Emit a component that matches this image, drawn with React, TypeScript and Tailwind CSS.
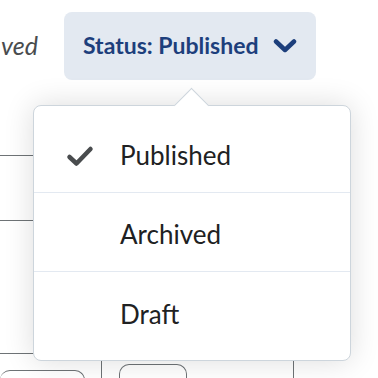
import React from 'react'

const items = ['Published', 'Archived', 'Draft']

const App = () => {
    return (
        <div className="relative w-[378px] h-[378px] overflow-hidden bg-white font-['Lato','Noto_Sans',sans-serif]">

            {/* Header — filter label + status button */}
            <div className="flex items-center h-[92px] pb-[1px]">
                <span className="w-[64px] shrink-0 pr-[26px] text-right whitespace-nowrap text-[25px] italic text-[#494c4e]">ved</span>
                <button className="flex items-center gap-[14px] h-[68px] w-[252px] pl-[19px] rounded-[8px] bg-[#e3e9f1] text-[23px] font-bold text-[#1d3f7c]">
                    Status: Published
                    <svg width="24" height="16" viewBox="0 0 24 16">
                        <path d="M3 3.5 L12 12 L21 3.5" fill="none" stroke="#1d3f7c" strokeWidth="4.5" strokeLinecap="round" strokeLinejoin="round" />
                    </svg>
                </button>
            </div>

            {/* Table behind the menu */}
            <div className="w-[320px] mt-[63px]">
                <div className="h-[66px] border-t border-b border-[#6e7376]" />
                <div className="h-[133px] border-b border-[#6e7376]" />
                <div className="flex h-[30px]">
                    <div className="w-[102px] border-r border-[#6e7376] pt-[16px]">
                        <div className="h-[20px] w-[85px] rounded-t-[10px] border-t border-r border-[#6e7376]" />
                    </div>
                    <div className="w-[192px] border-r border-[#6e7376] pt-[10px] pl-[17px]">
                        <div className="h-[20px] w-[68px] rounded-t-[10px] border-t border-l border-r border-[#6e7376]" />
                    </div>
                </div>
            </div>

            {/* Dropdown menu */}
            <div className="absolute left-[33px] top-[105px] w-[318px] h-[256px] rounded-[8px] border border-[#cdd5dc] bg-white shadow-[0_0_30px_rgba(0,0,0,0.14)]">
                <div className="absolute left-[145px] -top-[13px] w-[25px] h-[25px] rotate-45 bg-white border-t border-l border-[#cdd5dc]" />
                <div className="relative flex flex-col pt-[8px]">
                    {items.map((item, i) => (
                        <div key={item} className={`flex items-center h-[79px] pt-[5px] ${i < items.length - 1 ? 'border-b border-[#e3e9f1]' : ''}`}>
                            <div className="w-[86px] flex justify-end pr-[26px]">
                                {i === 0 && (
                                    <svg width="28" height="22" viewBox="0 0 28 22">
                                        <path d="M3.5 12 L10.5 18.5 L24.5 4" fill="none" stroke="#494c4e" strokeWidth="4.5" strokeLinecap="round" strokeLinejoin="round" />
                                    </svg>
                                )}
                            </div>
                            <span className="text-[26px] text-[#202122]">{item}</span>
                        </div>
                    ))}
                </div>
            </div>
        </div>
    )
}

export default App
